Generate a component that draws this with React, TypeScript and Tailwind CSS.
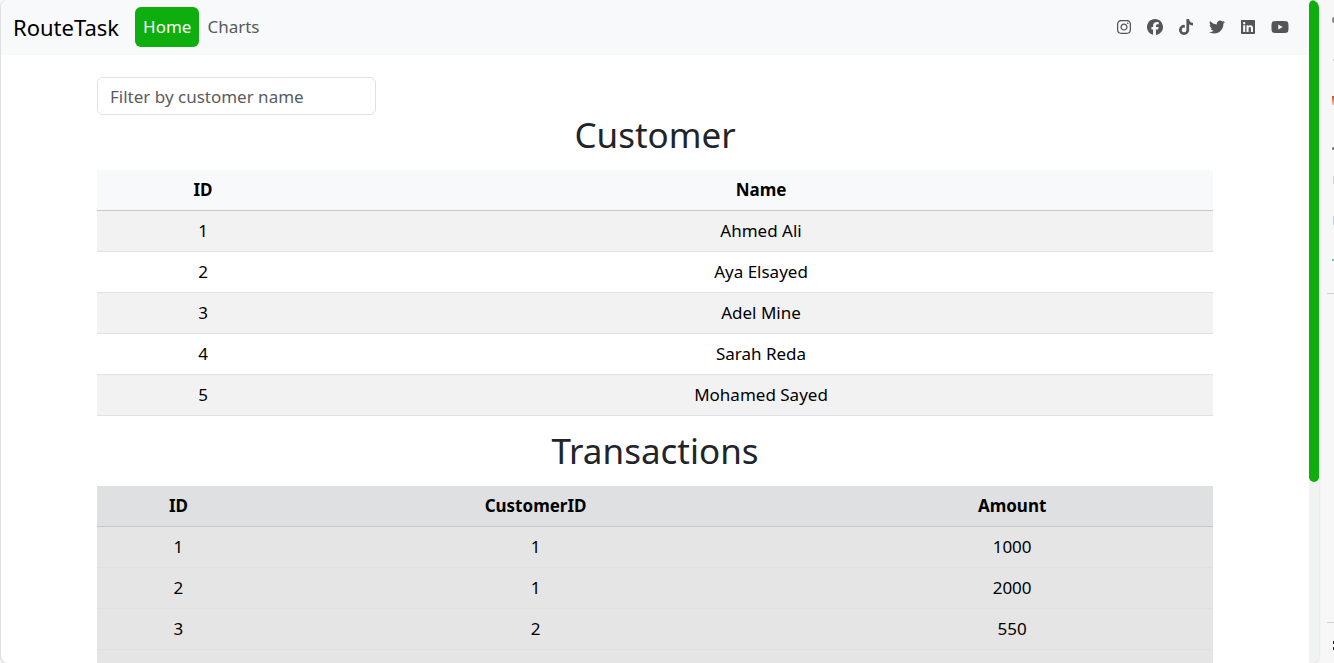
import { FaInstagram, FaFacebook, FaTiktok, FaTwitter, FaLinkedin, FaYoutube } from "react-icons/fa6";

const customers = [
  { id: 1, name: "Ahmed Ali" },
  { id: 2, name: "Aya Elsayed" },
  { id: 3, name: "Adel Mine" },
  { id: 4, name: "Sarah Reda" },
  { id: 5, name: "Mohamed Sayed" },
];

const transactions = [
  { id: 1, customerId: 1, amount: 1000 },
  { id: 2, customerId: 1, amount: 2000 },
  { id: 3, customerId: 2, amount: 550 },
];

const socials = [
  { label: "Instagram", Icon: FaInstagram, size: "h-4 w-4" },
  { label: "Facebook", Icon: FaFacebook, size: "h-4 w-4" },
  { label: "TikTok", Icon: FaTiktok, size: "h-4 w-4" },
  { label: "Twitter", Icon: FaTwitter, size: "h-4 w-4" },
  { label: "LinkedIn", Icon: FaLinkedin, size: "h-4 w-4" },
  { label: "YouTube", Icon: FaYoutube, size: "h-4 w-[18px]" },
];

const sidebarMarks = [
  "h-[6px] w-[2px] rounded-l-full bg-[#8b8b8b]",
  "h-[2px] w-px bg-[#c3cdf0]",
  "h-[9px] w-[2px] bg-linear-to-b from-[#c9501c] to-[#f3c4b4]",
  "mt-4 h-[3px] w-[2px] rounded-l-full bg-[#707070]",
  "h-2 w-px bg-[#cfcfe6]",
  "h-[9px] w-px bg-[#b3d4e8]",
  "h-[2px] w-[2px] bg-[#62c4d6]",
];

function Navbar() {
  return (
    <nav className="flex items-center bg-[#f8f9fa] px-3 pt-[7px] pb-2">
      <a href="#" className="mr-4 text-[22px] leading-[30px] text-black">RouteTask</a>
      <a href="#home" className="rounded-md bg-[#0dae0d] p-2 text-[#f8f9fa]">Home</a>
      <a href="#charts" className="p-2 text-[#595a5a]">Charts</a>
      <div className="mr-2 ml-auto flex items-center gap-[15px] text-[#555]">
        {socials.map(({ label, Icon, size }) => (
          <a key={label} href={"#" + label} aria-label={label}>
            <Icon className={size} />
          </a>
        ))}
      </div>
    </nav>
  );
}

function CustomerTable() {
  return (
    <table className="mt-4 w-full table-fixed border-collapse text-center text-black">
      <colgroup>
        <col className="w-[19%]" />
        <col />
      </colgroup>
      <thead>
        <tr className="border-b border-[#c6c7c8] bg-[#f8f9fa]">
          <th className="p-2">ID</th>
          <th className="p-2">Name</th>
        </tr>
      </thead>
      <tbody>
        {customers.map((c) => (
          <tr key={c.id} className="border-b border-[#dee2e6] odd:bg-[#f2f2f2]">
            <td className="p-2">{c.id}</td>
            <td className="p-2">{c.name}</td>
          </tr>
        ))}
      </tbody>
    </table>
  );
}

function TransactionTable() {
  return (
    <table className="mt-4 w-full table-fixed border-collapse text-center text-black">
      <colgroup>
        <col className="w-[14.6%]" />
        <col className="w-[49.4%]" />
        <col />
      </colgroup>
      <thead>
        <tr className="border-b border-[#c6c7c8] bg-[#dfe0e1]">
          <th className="p-2">ID</th>
          <th className="p-2">CustomerID</th>
          <th className="p-2">Amount</th>
        </tr>
      </thead>
      <tbody>
        {transactions.map((t) => (
          <tr key={t.id} className="border-b border-[#dfe0e1] bg-[#e5e5e5]">
            <td className="p-2">{t.id}</td>
            <td className="p-2">{t.customerId}</td>
            <td className="p-2">{t.amount}</td>
          </tr>
        ))}
        <tr className="bg-[#e5e5e5]">
          <td colSpan={3} className="h-10" />
        </tr>
      </tbody>
    </table>
  );
}

function Sidebar() {
  return (
    <aside className="flex w-[15px] shrink-0 flex-col items-end">
      {sidebarMarks.map((mark) => (
        <div key={mark} className="flex h-10 items-center">
          <span className={mark} />
        </div>
      ))}
      <div className="mt-[13px] h-px w-[7px] bg-[#d0d0d0]" />
      <div className="mt-auto h-px w-[7px] bg-[#d0d0d0]" />
      <div className="flex h-10 flex-col justify-center gap-[3px] pt-1">
        <span className="h-[3px] w-px bg-[#222]" />
        <span className="h-[3px] w-px bg-[#222]" />
      </div>
    </aside>
  );
}

export default function App() {
  return (
    <div className="flex h-screen overflow-hidden bg-[#f7f7f7] font-['Noto_Sans','Open_Sans',sans-serif] text-[17px] leading-6">
      <div className="flex min-w-0 flex-1 overflow-hidden rounded-lg border-l border-[#dedede] bg-white shadow">
        <div className="min-w-0 flex-1 overflow-hidden">
          <Navbar />
          <main className="mx-auto max-w-[1140px] px-3 pt-[22px]">
            <input
              type="text"
              aria-label="Filter by customer name"
              placeholder="Filter by customer name"
              className="block h-[38px] w-1/4 rounded-md border border-[#dee2e6] bg-white px-3 placeholder:text-[#595c5f]"
            />
            <h2 className="text-center text-[35px] leading-[39px] font-normal text-[#212529]">Customer</h2>
            <CustomerTable />
            <h2 className="mt-4 text-center text-[35px] leading-[38px] font-normal text-[#212529]">Transactions</h2>
            <TransactionTable />
          </main>
        </div>
        <div className="w-[10px] shrink-0 bg-[#f1f2f2]">
          <div className="h-[72.7%] rounded-[5px] bg-[#0dae0d]" />
        </div>
      </div>
      <Sidebar />
    </div>
  );
}
